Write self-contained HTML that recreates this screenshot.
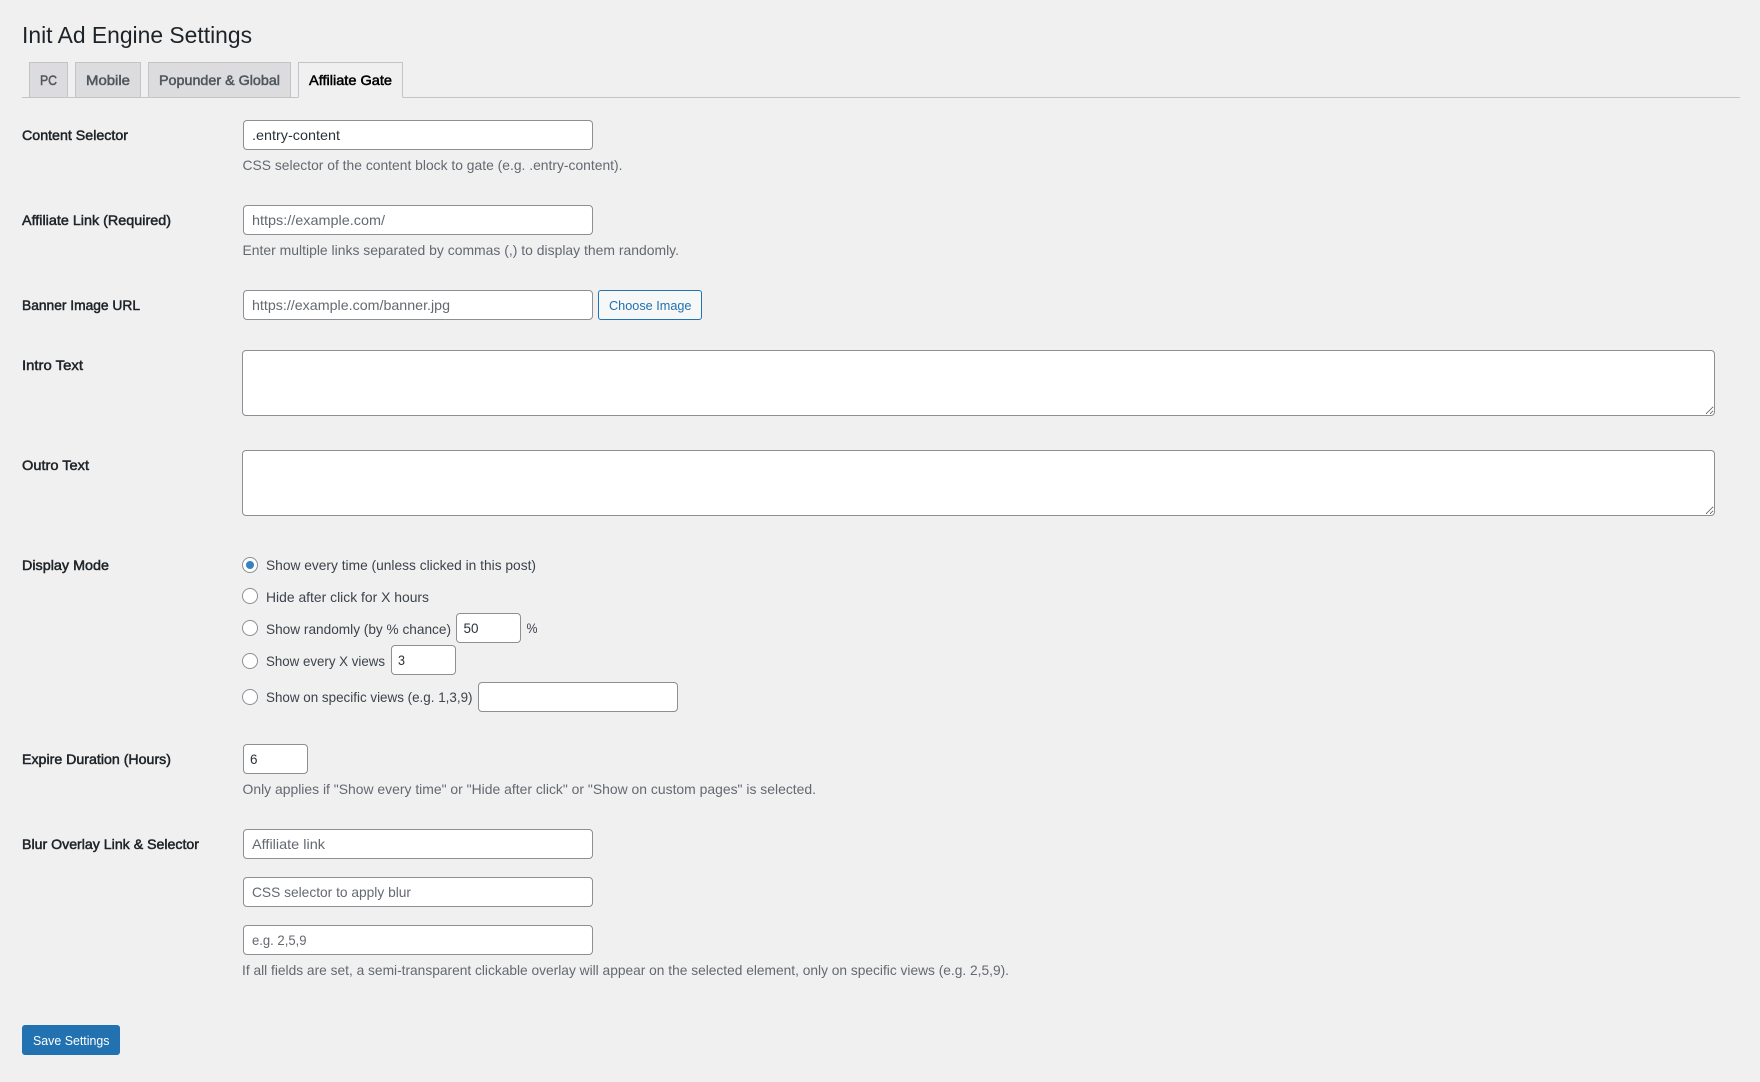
<!DOCTYPE html>
<html lang="en"><head><meta charset="utf-8"><title>Init Ad Engine Settings</title>
<style>
html,body{margin:0;padding:0;width:1760px;height:1082px;overflow:hidden;background:#f0f0f1}
body{position:relative;font-family:"Liberation Sans",Arial,sans-serif}
.a{position:absolute;box-sizing:border-box}
.line{left:22px;top:97px;width:1718px;height:1px;background:#c3c4c7}
.tab{top:62px;height:36px;border:1px solid #c3c4c7;background:#dcdcde}
.tab.on{background:#f0f0f1;border-bottom-color:#f0f0f1}
input,textarea{position:absolute;box-sizing:border-box;margin:0;padding:0;background:#fff;border:1px solid #8c8f94;border-radius:4px;outline:0}
input[type=text]{height:30px}
textarea{left:242px;width:1473px;height:66px}
input[type=radio]{appearance:none;-webkit-appearance:none;left:242px;width:16px;height:16px;border-radius:50%}
input[type=radio]:checked::before{content:"";position:absolute;left:3px;top:3px;width:8px;height:8px;border-radius:50%;background:#3582c4}
.btn{border-radius:3px}
.b1{left:598px;top:290px;width:104px;height:30px;border:1px solid #2271b1;background:#f6f7f7}
.b2{left:22px;top:1025px;width:98px;height:30px;background:#2271b1;border:1px solid #2271b1}
svg{position:absolute;left:0;top:0;pointer-events:none}
text{font-family:"Liberation Sans",Arial,sans-serif;font-size:14px}
.h{font-size:23px;fill:#1d2327}
.t{fill:#50575e;stroke:#50575e;stroke-width:.5px}
.l{fill:#1d2327;stroke:#1d2327;stroke-width:.5px}
.v{fill:#2c3338}
.p{fill:#646970}
.d{fill:#646970}
.r{fill:#3c434a}
.s{font-size:13px}
</style></head><body>
<div class="a line"></div>
<div class="a tab" style="left:29px;width:39px"></div>
<div class="a tab" style="left:75px;width:66px"></div>
<div class="a tab" style="left:148px;width:143px"></div>
<div class="a tab on" style="left:298px;width:105px"></div>

<input type="text" style="left:243px;top:120px;width:350px">
<input type="text" style="left:243px;top:205px;width:350px">
<input type="text" style="left:243px;top:290px;width:350px">
<div class="a btn b1"></div>
<textarea style="top:350px"></textarea>
<textarea style="top:450px"></textarea>
<input type="radio" name="m" checked style="top:557px">
<input type="radio" name="m" style="top:588px">
<input type="radio" name="m" style="top:620px">
<input type="radio" name="m" style="top:653px">
<input type="radio" name="m" style="top:689px">
<input type="text" style="left:456px;top:613px;width:65px">
<input type="text" style="left:391px;top:645px;width:65px">
<input type="text" style="left:478px;top:682px;width:200px">
<input type="text" style="left:243px;top:744px;width:65px">
<input type="text" style="left:243px;top:829px;width:350px">
<input type="text" style="left:243px;top:877px;width:350px">
<input type="text" style="left:243px;top:925px;width:350px">
<div class="a btn b2"></div>

<svg width="1760" height="1082" viewBox="0 0 1760 1082" xmlns="http://www.w3.org/2000/svg">
<g>
<text class="h" x="22" y="43" textLength="230" lengthAdjust="spacingAndGlyphs">Init Ad Engine Settings</text>
<text class="t" x="40" y="85" textLength="17" lengthAdjust="spacingAndGlyphs">PC</text>
<text class="t" x="86" y="85" textLength="44" lengthAdjust="spacingAndGlyphs">Mobile</text>
<text class="t" x="159" y="85" textLength="121" lengthAdjust="spacingAndGlyphs">Popunder &amp; Global</text>
<text class="t" x="309" y="85" textLength="83" lengthAdjust="spacingAndGlyphs" style="fill:#000;stroke:#000">Affiliate Gate</text>

<text class="l" x="22" y="140" textLength="106" lengthAdjust="spacingAndGlyphs">Content Selector</text>
<text class="l" x="22" y="225" textLength="149" lengthAdjust="spacingAndGlyphs">Affiliate Link (Required)</text>
<text class="l" x="22" y="310" textLength="118" lengthAdjust="spacingAndGlyphs">Banner Image URL</text>
<text class="l" x="22" y="370" textLength="61" lengthAdjust="spacingAndGlyphs">Intro Text</text>
<text class="l" x="22" y="470" textLength="67" lengthAdjust="spacingAndGlyphs">Outro Text</text>
<text class="l" x="22" y="570" textLength="87" lengthAdjust="spacingAndGlyphs">Display Mode</text>
<text class="l" x="22" y="764" textLength="149" lengthAdjust="spacingAndGlyphs">Expire Duration (Hours)</text>
<text class="l" x="22" y="849" textLength="177" lengthAdjust="spacingAndGlyphs">Blur Overlay Link &amp; Selector</text>

<text class="v" x="252" y="140" textLength="88" lengthAdjust="spacingAndGlyphs">.entry-content</text>
<text class="p" x="252" y="225" textLength="133" lengthAdjust="spacingAndGlyphs">https://example.com/</text>
<text class="p" x="252" y="310" textLength="198" lengthAdjust="spacingAndGlyphs">https://example.com/banner.jpg</text>
<text class="s" x="609" y="310" textLength="82.5" lengthAdjust="spacingAndGlyphs" style="fill:#2271b1">Choose Image</text>

<text class="d" x="242.5" y="170" textLength="380" lengthAdjust="spacingAndGlyphs">CSS selector of the content block to gate (e.g. .entry-content).</text>
<text class="d" x="242.5" y="255" textLength="436.5" lengthAdjust="spacingAndGlyphs">Enter multiple links separated by commas (,) to display them randomly.</text>

<text class="r" x="266" y="570" textLength="270" lengthAdjust="spacingAndGlyphs">Show every time (unless clicked in this post)</text>
<text class="r" x="266" y="602" textLength="163" lengthAdjust="spacingAndGlyphs">Hide after click for X hours</text>
<text class="r" x="266" y="634" textLength="185" lengthAdjust="spacingAndGlyphs">Show randomly (by % chance)</text>
<text class="v" x="463.5" y="633" textLength="15" lengthAdjust="spacingAndGlyphs">50</text>
<text class="r" x="526.5" y="633" textLength="11" lengthAdjust="spacingAndGlyphs">%</text>
<text class="r" x="266" y="666" textLength="119" lengthAdjust="spacingAndGlyphs">Show every X views</text>
<text class="v" x="398" y="665" textLength="7" lengthAdjust="spacingAndGlyphs">3</text>
<text class="r" x="266" y="702" textLength="206.5" lengthAdjust="spacingAndGlyphs">Show on specific views (e.g. 1,3,9)</text>

<text class="v" x="250" y="764" textLength="7.5" lengthAdjust="spacingAndGlyphs">6</text>
<text class="d" x="242.5" y="794" textLength="573.5" lengthAdjust="spacingAndGlyphs">Only applies if "Show every time" or "Hide after click" or "Show on custom pages" is selected.</text>

<text class="p" x="252" y="849" textLength="73" lengthAdjust="spacingAndGlyphs">Affiliate link</text>
<text class="p" x="252" y="897" textLength="159" lengthAdjust="spacingAndGlyphs">CSS selector to apply blur</text>
<text class="p" x="252" y="945" textLength="54.5" lengthAdjust="spacingAndGlyphs">e.g. 2,5,9</text>
<text class="d" x="242" y="975" textLength="767" lengthAdjust="spacingAndGlyphs">If all fields are set, a semi-transparent clickable overlay will appear on the selected element, only on specific views (e.g. 2,5,9).</text>

<text class="s" x="33" y="1045" textLength="76.5" lengthAdjust="spacingAndGlyphs" style="fill:#fff">Save Settings</text>
</g>
</svg>
</body></html>
